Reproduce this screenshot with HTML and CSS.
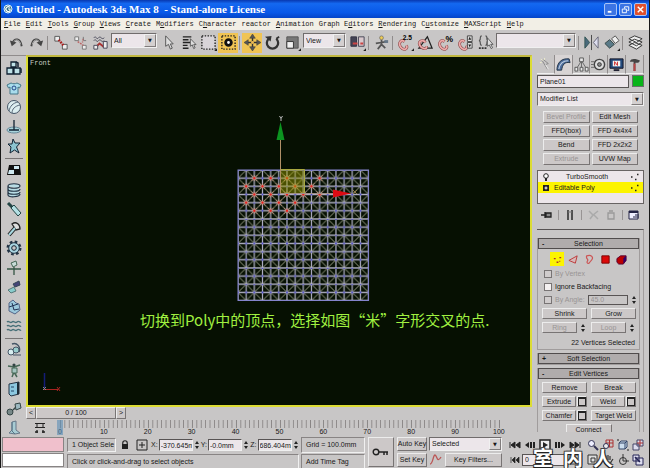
FILE: index.html
```html
<!DOCTYPE html>
<html lang="en">
<head>
<meta charset="UTF-8">
<meta name="viewport" content="width=device-width, initial-scale=1.0">
<title>Untitled - Autodesk 3ds Max 8</title>
<link rel="stylesheet" href="styles.css">
</head>
<body>

<!-- title bar -->
<header class="titlebar">
    <svg class="app-icon" viewBox="0 0 10 10"><circle cx="5" cy="5" r="4" fill="#2a6a80" stroke="#dff4ff"/><path d="M7 3.4A2.4 2.4 0 1 0 7 6.8V5H5" fill="none" stroke="#fff" stroke-width="1.2"/></svg>
    <h1>Untitled - Autodesk 3ds Max 8 &nbsp;- Stand-alone License</h1>
    <div class="win-btns">
        <button aria-label="Minimize"><svg viewBox="0 0 12 12"><path d="M3 8.5h4" stroke="#fff" stroke-width="2"/></svg></button>
        <button aria-label="Restore"><svg viewBox="0 0 12 12"><path d="M5 5V3h4.500v4H8M2.500 5.500h4.500v4H2.500z" fill="none" stroke="#fff"/></svg></button>
        <button class="close" aria-label="Close"><svg viewBox="0 0 12 12"><path d="M3 3l6 6M9 3l-6 6" stroke="#fff" stroke-width="1.600"/></svg></button>
    </div>
</header>

<!-- menu -->
<nav class="menubar">
    <a href="#"><u>F</u>ile</a>
    <a href="#"><u>E</u>dit</a>
    <a href="#"><u>T</u>ools</a>
    <a href="#"><u>G</u>roup</a>
    <a href="#"><u>V</u>iews</a>
    <a href="#"><u>C</u>reate</a>
    <a href="#">M<u>o</u>difiers</a>
    <a href="#">C<u>h</u>aracter</a>
    <a href="#">reactor</a>
    <a href="#"><u>A</u>nimation</a>
    <a href="#">Graph E<u>d</u>itors</a>
    <a href="#"><u>R</u>endering</a>
    <a href="#">C<u>u</u>stomize</a>
    <a href="#"><u>M</u>AXScript</a>
    <a href="#"><u>H</u>elp</a>
</nav>

<!-- main toolbar -->
<div class="toolbar">
    <button class="tool" aria-label="Undo"><svg viewBox="0 0 18 18"><path d="M5 9.500C7 4 13 4 14.500 13" fill="none" stroke="#444" stroke-width="2"/><path d="M2 7l2 6 5-4z" fill="#444"/><path d="M6 8C8 5.500 12 5 13.500 11" fill="none" stroke="#eee" stroke-width=".6"/></svg></button>
    <button class="tool" aria-label="Redo"><svg viewBox="0 0 18 18"><path d="M13 9.500C11 4 5 4 3.500 13" fill="none" stroke="#444" stroke-width="2"/><path d="M16 7l-2 6-5-4z" fill="#444"/><path d="M12 8C10 5.500 6 5 4.500 11" fill="none" stroke="#eee" stroke-width=".6"/></svg></button>
    <i class="sep"></i>
    <button class="tool" aria-label="Link"><svg viewBox="0 0 18 18"><path d="M3 2.500h5v5H3zM11 11h5v5h-5z" fill="#eee" stroke="#555"/><path d="M7 6l5 6" stroke="#a22" stroke-width="2.500" stroke-dasharray="2 1"/></svg></button>
    <button class="tool" aria-label="Unlink"><svg viewBox="0 0 18 18"><path d="M3 3h4v4H3zM11 12h4v4h-4z" fill="#eee" stroke="#777"/><path d="M6 8l6 4M12 5l-1 4" stroke="#b66" stroke-width="1.500" stroke-dasharray="2 1"/><path d="M12 3v3M15 7h-3" stroke="#777"/></svg></button>
    <button class="tool" aria-label="Bind to Space Warp"><svg viewBox="0 0 18 18"><path d="M2 4c2-3 3 3 5 0s3 3 6 0M2 7c2-3 3 3 5 0s3 3 6 0" fill="none" stroke="#445"/><path d="M4 14l4-4 5 4" fill="none" stroke="#a33" stroke-width="2"/><path d="M2 12h4v4H2zM12 8h4v7h-4z" fill="#eee" stroke="#445"/></svg></button>
    <span class="combo combo-filter"><select aria-label="Selection filter"><option>All</option></select></span>
    <button class="tool" aria-label="Select"><svg viewBox="0 0 18 18"><path d="M6 2v11l3-2 2 5 2-1-2-4.500h3z" fill="#ddd" stroke="#555"/></svg></button>
    <button class="tool" aria-label="Select by Name"><svg viewBox="0 0 18 18"><path d="M3 3h9M3 6h6M3 9h8M3 12h5M3 15h6" stroke="#222" stroke-width="1.500"/><path d="M11 5v8l2-1.500 1.500 4 1.500-.8-1.500-3.500H17z" fill="#ddd" stroke="#444" stroke-width=".8"/></svg></button>
    <button class="tool" aria-label="Rectangular Region"><svg viewBox="0 0 18 18"><path d="M2 2h14v14H2z" fill="#d8d4d8" stroke="#222" stroke-width="1.500" stroke-dasharray="1.500 1.500"/><path d="M15 18h3v-3z" fill="#222"/></svg></button>
    <button class="tool on" aria-label="Crossing"><svg viewBox="0 0 18 18"><path d="M2 2h14v14H2z" fill="none" stroke="#222" stroke-width="1.500" stroke-dasharray="1.500 1.500"/><circle cx="9" cy="9" r="3" fill="#fff" stroke="#111" stroke-width="3"/></svg></button>
    <i class="sep"></i>
    <button class="tool on" aria-label="Move"><svg viewBox="0 0 18 18"><path d="M9 3v12M3 9h12" stroke="#333" stroke-width="1.500"/><path d="M9 0l3 4.500H6zM9 18l3-4.500H6zM0 9l4.500-3v6zM18 9l-4.500-3v6z" fill="#555" stroke="#333" stroke-width=".5"/><circle cx="9" cy="9" r="1.500" fill="#eb5"/></svg></button>
    <button class="tool" aria-label="Rotate"><svg viewBox="0 0 18 18"><path d="M5 5a6 6 0 1 0 8 0" fill="none" stroke="#333" stroke-width="2.400"/><path d="M1 3l7-1-1 6z" fill="#333"/><path d="M13 5l3-2" stroke="#333" stroke-width="2"/></svg></button>
    <button class="tool" aria-label="Scale"><svg viewBox="0 0 18 18"><path d="M3 3h12v12H3z" fill="#777" stroke="#555"/><path d="M3 8h7v7H3z" fill="#f0f0f0" stroke="#333"/><path d="M15 18h3v-3z" fill="#222"/></svg></button>
    <span class="combo combo-view"><select aria-label="Reference coordinate system"><option>View</option></select></span>
    <button class="tool" aria-label="Pivot Center"><svg viewBox="0 0 18 18"><path d="M2 3h6v10H2z" fill="#445" stroke="#334"/><path d="M10 3h6v10h-6z" fill="#d8c8cc" stroke="#445"/><path d="M4 10h5M12 10h3" stroke="#c44" stroke-width="2"/><path d="M15 18h3v-3z" fill="#222"/></svg></button>
    <i class="sep"></i>
    <button class="tool" aria-label="Manipulate"><svg viewBox="0 0 18 18"><path d="M9 6v5M3 10l6-1 5-1M9 11l-4 5M9 11l4 4" fill="none" stroke="#555" stroke-width="1.800"/><circle cx="9" cy="4" r="2" fill="#ec5" stroke="#555" stroke-width=".6"/><path d="M12 8h4" stroke="#678" stroke-width="3"/></svg></button>
    <i class="sep"></i>
    <button class="tool" aria-label="Snap 2.5"><svg viewBox="0 0 18 18"><path d="M8 8C4 5 1 10 4 14s8 2 6-2" fill="none" stroke="#844" stroke-width="3"/><path d="M8 8C4 5 1 10 4 14s8 2 6-2" fill="none" stroke="#eaa" stroke-width="1.800"/><text x="6" y="6" class="glyph">2.5</text><path d="M15 18h3v-3z" fill="#222"/></svg></button>
    <button class="tool" aria-label="Angle Snap"><svg viewBox="0 0 18 18"><path d="M2 15h14L11 3z" fill="none" stroke="#222" stroke-width="1.300"/><path d="M9 9C6 5 1 8 3 12s8 5 7 1" fill="none" stroke="#844" stroke-width="3"/><path d="M9 9C6 5 1 8 3 12s8 5 7 1" fill="none" stroke="#eaa" stroke-width="1.800"/></svg></button>
    <button class="tool" aria-label="Percent Snap"><svg viewBox="0 0 18 18"><path d="M8 8C4 5 1 10 4 14s8 2 6-2" fill="none" stroke="#844" stroke-width="3"/><path d="M8 8C4 5 1 10 4 14s8 2 6-2" fill="none" stroke="#eaa" stroke-width="1.800"/><text x="9" y="8" class="glyph big">%</text></svg></button>
    <button class="tool" aria-label="Spinner Snap"><svg viewBox="0 0 18 18"><path d="M8 8C4 5 1 10 4 14s8 2 6-2" fill="none" stroke="#844" stroke-width="3"/><path d="M8 8C4 5 1 10 4 14s8 2 6-2" fill="none" stroke="#eaa" stroke-width="1.800"/><path d="M11 2h5v6h-5zM11 9h5v6h-5z" fill="#ddd" stroke="#444"/><path d="M12 6l1.500-3L15 6zM12 11l1.500 3 1.500-3z" fill="#222"/></svg></button>
    <button class="tool" aria-label="Named Selection Sets"><svg viewBox="0 0 18 18"><path d="M5 2C2 2 5 7 2 7c3 0 0 5 3 5M9 2c3 0 0 5 3 5-3 0 0 5-3 5" fill="none" stroke="#555" stroke-width="1.200"/><path d="M11 4v9l2-1.500 2 4 1.500-1-2-3.500H17z" fill="#ddd" stroke="#444" stroke-width=".8"/><path d="M2 15h8" stroke="#333" stroke-width="2" stroke-dasharray="2 1"/></svg></button>
    <span class="combo combo-sets"><select aria-label="Named selection set"><option></option></select></span>
    <i class="sep"></i>
    <button class="tool" aria-label="Mirror"><svg viewBox="0 0 18 18"><path d="M2 3v12l5-6z" fill="#4a6a7c" stroke="#355"/><path d="M9 1v16" stroke="#444"/><path d="M16 3v12l-5-6z" fill="#dde" stroke="#667"/></svg></button>
    <button class="tool" aria-label="Align"><svg viewBox="0 0 18 18"><path d="M2 10l5-4 5 5-5 4z" fill="#5a7a88" stroke="#344"/><path d="M9 5l4-3 4 5-4 3z" fill="#eee" stroke="#555"/><path d="M15 18h3v-3z" fill="#222"/></svg></button>
    <i class="sep"></i>
    <button class="tool" aria-label="Layers"><svg viewBox="0 0 18 18"><path d="M2 12l6-3 8 3-6 4zM2 8.500l6-3 8 3-6 4zM2 5l6-3 8 3-6 4z" fill="#eee" stroke="#333"/></svg></button>
</div>

<main class="workspace">

    <!-- reactor toolbar -->
    <aside class="reactor">
        <button aria-label="Rigid Body"><svg viewBox="0 0 16 16"><path d="M5 2h5v5H5zM1 8h6v6H1zM8 8h6v6H8z" fill="#bfe2e8" stroke="#123" stroke-width="1.300"/><path d="M10 2l2 1v4M14 8l1 1v4" fill="none" stroke="#123" stroke-width="1.500"/></svg></button>
        <button aria-label="Cloth"><svg viewBox="0 0 16 16"><path d="M1 5l4-2c2 1 4 1 6 0l4 2-1.500 3L12 7v7H4V7l-1.500 1z" fill="#a8dcec" stroke="#478"/><circle cx="8" cy="8" r="2" fill="none" stroke="#248"/></svg></button>
        <button aria-label="Soft Body"><svg viewBox="0 0 16 16"><circle cx="8" cy="8" r="6.500" fill="#dceef0" stroke="#456"/><path d="M3 12C4 7 7 4 12 3M6 14c0-4 3-7 8-8" fill="none" stroke="#567"/></svg></button>
        <button aria-label="Rope"><svg viewBox="0 0 16 16"><ellipse cx="8" cy="11" rx="7" ry="3" fill="#a8d4dc" stroke="#689"/><path d="M8 1v10M3 11h10" stroke="#123" stroke-width="1.300"/></svg></button>
        <button aria-label="Deforming Mesh"><svg viewBox="0 0 16 16"><path d="M7 1l2 4 5 0-3.500 4L13 15l-4.500-3L4 15l1-6-3-3h4z" fill="#8cc4d0" stroke="#123"/></svg></button>
        <hr>
        <button aria-label="Plane"><svg viewBox="0 0 16 16"><path d="M3 3h11l1 10H1z" fill="#111"/><path d="M8 4h5v3H8zM3 8h5v4H2z" fill="#cfe8f0"/></svg></button>
        <button aria-label="Spring"><svg viewBox="0 0 16 16"><path d="M2 4c0-3 12-3 12 0s-12 3-12 0v3c0 3 12 3 12 0M2 7v3c0 3 12 3 12 0M2 10v3c0 3 12 2 12-1" fill="#b8dce4" stroke="#234" stroke-width="1.200"/></svg></button>
        <button aria-label="Dashpot"><svg viewBox="0 0 16 16"><path d="M2 2l5 5" stroke="#244" stroke-width="3"/><path d="M5 7l3-3 7 8-3 3z" fill="#b4e0e4" stroke="#244"/></svg></button>
        <button aria-label="Motor"><svg viewBox="0 0 16 16"><path d="M6 3c4-3 8 0 8 5l-4 1z" fill="#ddd" stroke="#222" stroke-width="1.300"/><path d="M9 7l-6 7" stroke="#222" stroke-width="4"/><path d="M9 7l-6 7" stroke="#a8d8e0" stroke-width="2"/></svg></button>
        <button aria-label="Wheel"><svg viewBox="0 0 16 16"><circle cx="8" cy="8" r="6" fill="none" stroke="#234" stroke-width="3" stroke-dasharray="2.500 2.200"/><circle cx="8" cy="8" r="5.300" fill="#a8d4e0" stroke="#234"/><circle cx="8" cy="8" r="2.300" fill="#c8c6c6" stroke="#123"/></svg></button>
        <button aria-label="Hinge"><svg viewBox="0 0 16 16"><path d="M1 9h14M8 7v8" stroke="#354" stroke-width="1.300"/><path d="M5 3l5-2 1 4-4 2z" fill="#c8dcd8" stroke="#465"/></svg></button>
        <button aria-label="Point to Point"><svg viewBox="0 0 16 16"><path d="M2 11l6-3 2 4-5 2z" fill="#8cc" stroke="#577"/><path d="M7 5l6-3 1 4-5 2z" fill="#447" stroke="#345"/></svg></button>
        <button aria-label="Fracture"><svg viewBox="0 0 16 16"><path d="M3 4l4-3 3 3 3 1 1 6-5 4-6-3z" fill="#9cc8dc" stroke="#568"/><path d="M6 4l2 7 5-1M3 8l9-3" stroke="#235" fill="none"/></svg></button>
        <button aria-label="Water"><svg viewBox="0 0 16 16"><path d="M1 4c2-2 3 2 5 0s3 2 5 0 3 1 4 0M1 8c2-2 3 2 5 0s3 2 5 0 3 1 4 0M1 12c2-2 3 2 5 0s3 2 5 0 3 1 4 0" fill="none" stroke="#487078" stroke-width="1.400"/></svg></button>
        <hr>
        <button aria-label="Wind"><svg viewBox="0 0 16 16"><path d="M6 2c5-2 9 3 7 8" fill="none" stroke="#456" stroke-width="1.500"/><circle cx="5" cy="10" r="3" fill="#d8eef0" stroke="#456"/><circle cx="10" cy="8" r="3" fill="#9cc" stroke="#456"/><path d="M7 13h8" stroke="#456"/></svg></button>
        <button aria-label="Ragdoll"><svg viewBox="0 0 16 16"><path d="M2 4l6 1 6-2M8 4v6M8 10l-2 5M8 10l3 5" stroke="#465" stroke-width="1.500" fill="none"/><circle cx="8" cy="3" r="1.600" fill="#344"/><path d="M6 6h5v5H6z" fill="#a4c4c0" stroke="#465"/></svg></button>
        <button aria-label="Preview"><svg viewBox="0 0 16 16"><path d="M3 3l10-2v12l-8 2-2-2z" fill="#8cc8e0" stroke="#234"/><path d="M11 1.500l2-.5v12l-2 .5z" fill="#1c2c38"/><path d="M5 6h3M5 10h3" stroke="#246"/></svg></button>
        <button aria-label="Properties"><svg viewBox="0 0 16 16"><circle cx="4" cy="11" r="3" fill="#788" stroke="#344"/><path d="M7 9l3-3" stroke="#344" stroke-width="1.500"/><path d="M9 3l5-1 1 5-5 2z" fill="#9cb8c0" stroke="#344"/></svg></button>
        <button aria-label="Analyze"><svg viewBox="0 0 16 16"><path d="M6 2l4-1v9l4 3-5 1-6-1 3-3z" fill="#a8ccd4" stroke="#678"/><path d="M6 2v9l3 3" fill="none" stroke="#578"/></svg></button>
    </aside>

    <section class="center">
        <div class="viewport">
            <span class="view-label">Front</span>
            <svg class="scene" viewBox="0 0 160 204">
                <defs>
                    <pattern id="mesh" width="16" height="16" patternUnits="userSpaceOnUse">
                        <path d="M0 8L8 0L16 8L8 16z" fill="none" stroke="#a4a890" stroke-width=".9"/>
                        <path d="M0 0h16M0 8h16M0 0v16M8 0v16M0 16h16M16 0v16" stroke="#b0b0c4" stroke-width="1.200"/>
                        <path d="M-.8 0h1.600M7.200 0h1.600M-.8 8h1.600M7.200 8h1.600M15.200 0h.8M15.200 8h.8" stroke="#4848c8" stroke-width="2"/>
                    </pattern>
                    <!-- selected vertex with its fading edges -->
                    <g id="star"><path d="M-3 0h6M0-3v6M-3-3l6 6M3-3l-6 6" stroke="#c4907c" stroke-width=".9"/><path d="M-1 0h2" stroke="#e8201c" stroke-width="2"/></g>
                </defs>
                <g transform="translate(13 65) scale(1.020)">
                    <rect width="128" height="128" fill="url(#mesh)"/>
                    <path d="M0 0h128v128H0z" fill="none" stroke="#8484cc"/>
                    <use href="#star" x="16" y="8"/><use href="#star" x="32" y="8"/><use href="#star" x="48" y="8"/><use href="#star" x="80" y="8"/>
                    <use href="#star" x="8" y="16"/><use href="#star" x="24" y="16"/><use href="#star" x="40" y="16"/><use href="#star" x="56" y="16"/><use href="#star" x="72" y="16"/>
                    <use href="#star" x="16" y="24"/><use href="#star" x="32" y="24"/><use href="#star" x="48" y="24"/><use href="#star" x="64" y="24"/><use href="#star" x="80" y="24"/>
                    <use href="#star" x="8" y="32"/><use href="#star" x="24" y="32"/><use href="#star" x="40" y="32"/><use href="#star" x="56" y="32"/>
                    <use href="#star" x="16" y="40"/><use href="#star" x="32" y="40"/><use href="#star" x="48" y="40"/>
                </g>
                <!-- move gizmo -->
                <path d="M55.500 64.500h24v24h-24z" fill="#a0a000" fill-opacity=".45" stroke="#a8a840"/>
                <path d="M55.500 88V34" stroke="#b09068"/>
                <path d="M55 88.500h53" stroke="#a09088"/>
                <path d="M55.500 17l-4 18h8z" fill="#0c9420"/>
                <path d="M126 88.500l-18-4v8z" fill="#dc0c14"/>
                <path d="M54.500 11l1.500 2.500 1.500-2.500M56 13.500V16" fill="none" stroke="#b8b8b8"/>
                <path d="M128 85l4 4M132 85l-4 4" stroke="#8c7848"/>
            </svg>
            <p class="caption" lang="zh">切换到Poly中的顶点，选择如图“米”字形交叉的点.</p>
            <svg class="tripod" viewBox="0 0 22 22"><path d="M4.500 2v16" stroke="#141c78" stroke-width="1.500"/><path d="M4 18.500h14" stroke="#a82420"/><path d="M3 16l3 3M6 16l-3 3" stroke="#888"/><path d="M17 16l3 4M20 16l-3 4" stroke="#a82420"/></svg>
        </div>

        <div class="time-slider">
            <button class="step">&lt;</button>
            <button class="thumb">0 / 100</button>
            <button class="step">&gt;</button>
        </div>

        <div class="trackbar">
            <svg class="curve-icon" viewBox="0 0 12 12"><path d="M1 1.500h10M1 5.500h10M3 1v4M9 1v4" stroke="#222" fill="none"/><path d="M1 10h3M8 10h3M3 8v3M9 8v3" stroke="#222" stroke-width="1.300"/></svg>
            <div class="ruler">
                <span class="now">0</span><span>10</span><span>20</span><span>30</span><span>40</span><span>50</span><span>60</span><span>70</span><span>80</span><span>90</span><span class="end">100</span>
            </div>
        </div>
    </section>

    <!-- command panel -->
    <aside class="panel">
        <div class="tabs">
            <button aria-label="Create"><svg viewBox="0 0 16 16"><path d="M4 3l6 10M6 3l5 4-3 1" fill="none" stroke="#888"/><path d="M3 2l2 2M2 6h2M7 1v2" stroke="#eec"/><path d="M8 8l3 5" stroke="#eee"/></svg></button>
            <button class="active" aria-label="Modify"><svg viewBox="0 0 16 16"><path d="M1 14C1 6 6 1 14 2l1 4C9 5 7 8 6 14z" fill="#4c6c9c" stroke="#234"/><path d="M3 13C4 7 7 4 13 4" fill="none" stroke="#bcd" stroke-width="1.300"/></svg></button>
            <button aria-label="Hierarchy"><svg viewBox="0 0 16 16"><path d="M8 4L3 12M8 4l5 8M8 4v8" stroke="#666"/><path d="M6 1h4v4H6zM1 11h3v4H1zM6.500 11h3v4h-3zM12 11h3v4h-3z" fill="#e8e8e8" stroke="#555"/></svg></button>
            <button aria-label="Motion"><svg viewBox="0 0 16 16"><circle cx="9" cy="8" r="5.500" fill="#ddd" stroke="#444" stroke-width="1.500"/><circle cx="9" cy="8" r="2" fill="#888" stroke="#333"/><path d="M0 5h4M0 8h3M0 11h4" stroke="#666"/></svg></button>
            <button aria-label="Display"><svg viewBox="0 0 16 16"><path d="M1 2h14v10H1z" fill="#234a7c" stroke="#112"/><path d="M4 4h8v6H4z" fill="#f4f4f4"/><path d="M6 9V5l3 4V5" fill="none" stroke="#c22"/><path d="M5 14h6" stroke="#223" stroke-width="2"/></svg></button>
            <button aria-label="Utilities"><svg viewBox="0 0 16 16"><path d="M3 5c1-4 7-3 11-1l-2 2H9v9H7V5z" fill="#444"/><path d="M8 7v8" stroke="#b44" stroke-width="2"/></svg></button>
        </div>

        <div class="obj-name">
            <input type="text" value="Plane01" aria-label="Object name">
            <button class="swatch" aria-label="Object color"></button>
        </div>
        <span class="combo combo-mod"><select aria-label="Modifier list"><option>Modifier List</option></select></span>

        <div class="mod-btns">
            <button disabled>Bevel Profile</button><button>Edit Mesh</button>
            <button>FFD(box)</button><button>FFD 4x4x4</button>
            <button>Bend</button><button>FFD 2x2x2</button>
            <button disabled>Extrude</button><button>UVW Map</button>
        </div>

        <ul class="stack">
            <li><svg viewBox="0 0 8 8"><circle cx="4" cy="3" r="2.300" fill="#fff" stroke="#222"/><path d="M4 5v3" stroke="#222" stroke-width="2"/></svg><span class="indent">TurboSmooth</span><svg class="dots" viewBox="0 0 8 8"><path d="M0 4h1.500M4 6.500h1.500M6 1.500h1.500" stroke="#222" stroke-width="1.500"/></svg></li>
            <li class="selected"><svg viewBox="0 0 8 8"><path d="M1 1h6v6H1z" fill="#222"/><path d="M2.500 4h3M4 2.500v3" stroke="#fff"/></svg><span>Editable Poly</span><svg class="dots" viewBox="0 0 8 8"><path d="M0 4h1.500M4 6.500h1.500M6 1.500h1.500" stroke="#222" stroke-width="1.500"/></svg></li>
        </ul>

        <div class="stack-tools">
            <button aria-label="Pin Stack"><svg viewBox="0 0 12 12"><path d="M0 6h4M4 3v6M5 4h5v4H5z" fill="#888" stroke="#222" stroke-width="1.300"/></svg></button>
            <i></i>
            <button aria-label="Show End Result"><svg viewBox="0 0 12 12"><path d="M4 1v10M8 1v10" stroke="#333" stroke-width="1.600"/><path d="M4 3h4" stroke="#777"/></svg></button>
            <i></i>
            <button aria-label="Make Unique"><svg viewBox="0 0 12 12"><path d="M1 2l4 4 5-4M5 6L2 10M6 6l4 4" stroke="#aaa" fill="none" stroke-width="1.500"/></svg></button>
            <button aria-label="Remove Modifier"><svg viewBox="0 0 12 12"><path d="M3 4h6v6H3zM4 2h4" stroke="#999" fill="none" stroke-width="1.300"/></svg></button>
            <i></i>
            <button aria-label="Configure"><svg viewBox="0 0 12 12"><path d="M1 2h9v8H1z" fill="#eef" stroke="#224"/><path d="M1 3h9" stroke="#224" stroke-width="2"/><path d="M5 8h6M7 6h4" stroke="#224"/></svg></button>
        </div>

        <div class="rollouts">
            <section class="rollout">
                <h2><b>-</b>Selection</h2>
                <div class="subobj">
                    <button class="on" aria-label="Vertex"><svg viewBox="0 0 12 12"><path d="M2 5h2M5 9h2M8 4h2M8 8h1" stroke="#a33" stroke-width="1.500"/></svg></button>
                    <button aria-label="Edge"><svg viewBox="0 0 12 12"><path d="M1 7l9-5-2 8z" fill="#d8b8b8" stroke="#b33"/></svg></button>
                    <button aria-label="Border"><svg viewBox="0 0 12 12"><path d="M3 2c5-2 8 2 5 5s-2 4-4 3 1-3 0-4-2-2-1-4z" fill="none" stroke="#c55" stroke-width="1.300"/></svg></button>
                    <button aria-label="Polygon"><svg viewBox="0 0 12 12"><path d="M2 2h8v8H2z" fill="#dc0808" stroke="#700"/></svg></button>
                    <button aria-label="Element"><svg viewBox="0 0 12 12"><path d="M1 5l4-3h6v5l-3 4H3L1 9z" fill="#b00" stroke="#503"/><path d="M8 4.500L11 2v5l-3 3.500z" fill="#306"/></svg></button>
                </div>
                <label class="check off"><input type="checkbox" disabled>By Vertex</label>
                <label class="check"><input type="checkbox">Ignore Backfacing</label>
                <div class="angle">
                    <label class="check off"><input type="checkbox" disabled>By Angle:</label>
                    <input class="num off" type="text" value="45.0" aria-label="Angle" disabled><span class="spin"></span>
                </div>
                <div class="pair"><button>Shrink</button><button>Grow</button></div>
                <div class="pair">
                    <div class="with-box"><button disabled>Ring</button><span class="spin"></span></div>
                    <div class="with-box"><button disabled>Loop</button><span class="spin"></span></div>
                </div>
                <p class="count">22 Vertices Selected</p>
            </section>
            <section class="rollout"><h2><b>+</b>Soft Selection</h2></section>
            <section class="rollout">
                <h2><b>-</b>Edit Vertices</h2>
                <div class="pair"><button>Remove</button><button>Break</button></div>
                <div class="pair">
                    <div class="with-box"><button>Extrude</button><button class="settings" aria-label="Extrude settings"></button></div>
                    <div class="with-box"><button>Weld</button><button class="settings" aria-label="Weld settings"></button></div>
                </div>
                <div class="pair">
                    <div class="with-box"><button>Chamfer</button><button class="settings" aria-label="Chamfer settings"></button></div>
                    <button>Target Weld</button>
                </div>
                <button class="connect">Connect</button>
            </section>
        </div>
    </aside>
</main>

<!-- status bar -->
<footer class="status">
    <div class="listener"><div class="macro"></div><div class="script"></div></div>

    <div class="info">
        <div class="coords">
            <span class="objs">1 Object Sele</span>
            <svg viewBox="0 0 12 12"><path d="M3 6V4a3 3 0 0 1 6 0v2" transform="translate(1.500 1) scale(.75)" fill="none" stroke="#222" stroke-width="1.500"/><path d="M3 5h6v5H3z" fill="#222"/></svg>
            <svg viewBox="0 0 12 12"><path d="M1 1h10v10H1z" fill="none" stroke="#222"/><path d="M6 3v6M3 6h6" stroke="#222"/></svg>
            <label>X:<input type="text" value="-370.645mm"></label><span class="spin"></span>
            <label>Y:<input type="text" value="-0.0mm"></label><span class="spin"></span>
            <label>Z:<input type="text" value="686.404mm"></label><span class="spin"></span>
        </div>
        <span class="cell">Grid = 100.0mm</span>
        <span class="prompt">Click or click-and-drag to select objects</span>
        <span class="cell tag">Add Time Tag</span>
    </div>

    <button class="key-btn" aria-label="Set Keys"><svg viewBox="0 0 18 10"><circle cx="4" cy="5" r="2.800" fill="none" stroke="#222" stroke-width="1.400"/><path d="M7 5h9M12 5v3M15 5v3" stroke="#222" stroke-width="1.500"/></svg></button>

    <div class="keys">
        <button>Auto Key</button>
        <span class="combo"><select aria-label="Key set"><option>Selected</option></select></span>
        <button>Set Key</button>
        <div class="filters">
            <svg viewBox="0 0 14 12"><path d="M1 11c3 0 3-9 5-9s2 9 6 2" fill="none" stroke="#b55" stroke-width="1.300"/></svg>
            <button>Key Filters...</button>
        </div>
    </div>

    <div class="play">
        <button aria-label="Go to Start"><svg viewBox="0 0 14 12"><path d="M2 3v6M7 3v6L3 6zM12 3v6L8 6z" fill="#222" stroke="#222"/></svg></button>
        <button aria-label="Previous Frame"><svg viewBox="0 0 14 12"><path d="M6 3v6L2 6z" fill="#222"/><path d="M8 3v6M11 3v6" stroke="#222" stroke-width="2"/></svg></button>
        <button aria-label="Play"><svg viewBox="0 0 14 12"><path d="M2 1h10v10H2z" fill="#eee" stroke="#222" stroke-width="1.500"/><path d="M5 3v6l5-3z" fill="#222"/></svg></button>
        <button aria-label="Next Frame"><svg viewBox="0 0 14 12"><path d="M8 3v6l4-3z" fill="#222"/><path d="M3 3v6M6 3v6" stroke="#222" stroke-width="2"/></svg></button>
        <button aria-label="Go to End"><svg viewBox="0 0 14 12"><path d="M12 3v6M7 3v6l4-3zM2 3v6l4-3z" fill="#222" stroke="#222"/></svg></button>
        <button aria-label="Key Mode"><svg viewBox="0 0 14 12"><path d="M3 3v6M7 3v6L4 6zM11 3v6L8 6z" fill="#222" stroke="#222" stroke-width=".7"/></svg></button>
        <input class="frame" type="text" value="0" aria-label="Current frame">
        <button aria-label="Time Configuration"><svg viewBox="0 0 14 12"><path d="M2 1h9v9H2z" fill="#ddd" stroke="#333"/><path d="M6 3v3h3" fill="none" stroke="#333"/></svg></button>
    </div>

    <div class="nav">
        <button aria-label="Zoom"><svg viewBox="0 0 12 12"><circle cx="4.500" cy="4.500" r="3" fill="#eef" stroke="#335"/><path d="M7 7l4 4" stroke="#335" stroke-width="2"/></svg></button>
        <button aria-label="Zoom All"><svg viewBox="0 0 12 12"><path d="M4 1h7v7H4zM4 4h7M7.500 1v7" fill="none" stroke="#a33"/><circle cx="4" cy="7" r="2.500" fill="#eee" stroke="#335"/></svg></button>
        <button aria-label="Zoom Extents"><svg viewBox="0 0 12 12"><path d="M2 4l2-2h6v6l-2 2H2zM2 4h6v6M8 4l2-2" fill="#cde" stroke="#346"/><path d="M0 1h2M10 11h2" stroke="#222"/></svg></button>
        <button aria-label="Zoom Extents All"><svg viewBox="0 0 12 12"><path d="M5 1h6v6H5zM1 5h6v6H1z" fill="#dde" stroke="#446"/><path d="M5 4h6M8 1v6" stroke="#a33"/></svg></button>
        <button aria-label="Region Zoom"><svg viewBox="0 0 12 12"><path d="M1 1h9v9H1z" fill="#ddd" stroke="#333"/><path d="M4 4h4v4H4z" fill="none" stroke="#333"/></svg></button>
        <button aria-label="Pan"><svg viewBox="0 0 12 12"><path d="M2 6V3M4 6V1.500M6 6V1M8 6V2M2 6c0 6 6 6 7 2l2-3" fill="none" stroke="#333" stroke-width="1.200"/></svg></button>
        <button aria-label="Arc Rotate"><svg viewBox="0 0 12 12"><circle cx="6" cy="7" r="3.500" fill="none" stroke="#333"/><path d="M6 0v7h6" fill="none" stroke="#333"/></svg></button>
        <button aria-label="Maximize Viewport"><svg viewBox="0 0 12 12"><path d="M1 1h6v6H1zM4 4h7v7H4z" fill="#dde" stroke="#225"/><path d="M3 3l5 5" stroke="#225" stroke-width="1.500"/></svg></button>
    </div>
    <div class="watermark" lang="zh"><span>室</span><span>内</span><span>人</span></div>
</footer>

</body>
</html>
```
FILE: styles.css
```css
* {
    box-sizing: border-box;
}
body {
    margin: 0;
    height: 100vh;
    display: flex;
    flex-direction: column;
    overflow: hidden;
    background-color: #c8c6c6;
    border-left: 1px solid #181818;
    border-right: 1px solid #181818;
    font-family: "Liberation Sans", Arial, sans-serif;
    font-size: 7px;
    line-height: 10px;
    color: #181818;
}
h1, h2, p, ul {
    margin: 0;
    padding: 0;
}
button, input, select {
    font: inherit;
    color: inherit;
    margin: 0;
    padding: 0;
    min-width: 0;
    border: none;
    border-radius: 0;
    background: none;
}
button {
    display: flex;
    align-items: center;
    justify-content: center;
    white-space: nowrap;
}
button:disabled {
    color: #989494;
}
svg {
    display: block;
}

/* title bar */
.titlebar {
    display: flex;
    align-items: center;
    height: 18px;
    flex: none;
    padding: 0 2px;
    background: linear-gradient(#0838b0, #1468f0 20%, #0858e8 70%, #0444c8);
}
.app-icon {
    width: 10px;
    height: 10px;
}
.titlebar h1 {
    flex: 1;
    padding-left: 3px;
    font-family: "Liberation Serif", serif;
    font-size: 11px;
    font-weight: bold;
    color: #fff;
}
.win-btns {
    display: flex;
    gap: 2px;
}
.win-btns button {
    width: 13px;
    height: 13px;
    border: 1px solid #a8c4f8;
    border-radius: 2px;
    background-color: #3c74e4;
}
.win-btns .close {
    background-color: #e0502c;
}
.win-btns svg {
    width: 11px;
    height: 11px;
}

/* menu */
.menubar {
    display: flex;
    align-items: center;
    flex: none;
    height: 12px;
    gap: 5px;
    padding-left: 3px;
    background-color: #f2efe6;
    font-family: "Liberation Mono", monospace;
    white-space: nowrap;
}
.menubar a {
    color: #181818;
    text-decoration: none;
}

/* main toolbar */
.toolbar {
    display: flex;
    align-items: center;
    flex: none;
    height: 25px;
    padding-left: 5px;
}
.tool {
    width: 20px;
    height: 20px;
    flex: none;
}
.tool svg {
    width: 17px;
    height: 17px;
}
.tool.on {
    background-color: #f0c454;
}
.glyph {
    font-size: 7px;
    font-weight: bold;
}
.glyph.big {
    font-size: 9px;
}
.sep {
    flex: none;
    width: 1px;
    height: 14px;
    margin: 0 2px 0 1px;
    background-color: #908c8c;
}

/* drop-downs */
.combo {
    display: flex;
    height: 13px;
    border: 1px solid #706c6c;
    border-right-color: #f0f0f0;
    border-bottom-color: #f0f0f0;
    background-color: #ece6ea;
}
.combo select {
    flex: 1;
    appearance: none;
    padding-left: 2px;
}
.combo::after {
    content: "▼";
    width: 10px;
    border: 1px solid #f0f0f0;
    border-right-color: #807c7c;
    border-bottom-color: #807c7c;
    background-color: #d4d0d0;
    font-family: "DejaVu Sans", sans-serif;
    font-size: 5px;
    line-height: 9px;
    text-align: center;
}
.toolbar .combo {
    flex: none;
    height: 15px;
    align-self: flex-start;
    margin: 3px 1px 0;
}
.toolbar .combo::after {
    line-height: 11px;
}
.toolbar .combo-filter {
    width: 46px;
}
.toolbar .combo-view {
    width: 43px;
}
.toolbar .combo-sets {
    width: 80px;
}

.workspace {
    flex: 1;
    display: flex;
    min-height: 0;
}

/* reactor toolbar */
.reactor {
    width: 25px;
    flex: none;
    display: flex;
    flex-direction: column;
    align-items: center;
    justify-content: space-between;
    padding-top: 4px;
    border-top: 1px solid #908c8c;
}
.reactor svg {
    width: 16px;
    height: 16px;
}
.reactor hr {
    width: 18px;
    height: 1px;
    margin: 0;
    border: none;
    background-color: #787474;
}

/* viewport */
.center {
    flex: 1;
    min-width: 0;
    display: flex;
    flex-direction: column;
}
.viewport {
    flex: 1;
    position: relative;
    background-color: #061002;
    border: 2px solid #dcdc34;
    border-top-color: #c0b840;
    overflow: hidden;
}
.view-label {
    position: absolute;
    left: 2px;
    top: 1px;
    font-family: "Liberation Mono", monospace;
    color: #c8ccc4;
}
.scene {
    position: absolute;
    left: 197px;
    top: 48px;
    width: 160px;
    height: 204px;
}
.caption {
    position: absolute;
    left: 112px;
    top: 252px;
    font-family: "Noto Sans CJK SC", sans-serif;
    font-size: 15px;
    line-height: 22px;
    white-space: nowrap;
    color: #a0f040;
}
.tripod {
    position: absolute;
    left: 12px;
    bottom: 12px;
    width: 22px;
    height: 22px;
}

/* time slider */
.time-slider {
    display: flex;
    flex: none;
    height: 12px;
}
.time-slider button,
.mod-btns button,
.pair button,
.connect,
.keys button,
.key-btn {
    border: 1px solid #ececec;
    border-right-color: #787474;
    border-bottom-color: #787474;
    background-color: #ccc8c8;
}
.time-slider .step {
    width: 10px;
}
.time-slider .thumb {
    width: 80px;
}
.trackbar {
    display: flex;
    flex: none;
    height: 17px;
    padding: 1px 32px 0 8px;
}
.curve-icon {
    width: 12px;
    height: 12px;
    margin-top: 2px;
}
.ruler {
    flex: 1;
    display: flex;
    margin-left: 14px;
}
.ruler span {
    flex: 1;
    width: 0;
    display: flex;
    padding-top: 7px;
    background: linear-gradient(90deg, #888484 1px, transparent 1px) 0 0 / 10% 8px repeat-x;
    text-indent: -4px;
}
.ruler .now {
    text-indent: -2px;
    position: relative;
}
.ruler .now::before {
    content: "";
    position: absolute;
    left: -3px;
    top: 0;
    width: 6px;
    height: 15px;
    background-color: #5c90b8;
    opacity: .6;
}
.ruler .end {
    flex: none;
    width: 1px;
    text-indent: -6px;
}

/* command panel */
.panel {
    width: 117px;
    flex: none;
    display: flex;
    flex-direction: column;
    padding: 0 5px 4px;
    min-height: 0;
}
.tabs {
    display: flex;
    height: 19px;
    flex: none;
}
.tabs button {
    flex: 1;
    border-right: 1px solid #908c8c;
    border-bottom: 1px solid #f0f0f0;
}
.tabs .active {
    background-color: #d8d4d4;
    border-bottom-color: #d8d4d4;
}
.tabs svg {
    width: 15px;
    height: 15px;
}
.obj-name {
    display: flex;
    gap: 3px;
    margin-top: 1px;
}
.obj-name input {
    flex: 1;
    height: 13px;
    padding-left: 2px;
    border: 1px solid #585454;
    background-color: #ece6ea;
}
.swatch {
    width: 12px;
    height: 12px;
    border: 1px solid #687068;
    background-color: #08b418;
}
.combo-mod {
    height: 14px;
    flex: none;
    margin-top: 4px;
}
.combo-mod::after {
    line-height: 10px;
}
.mod-btns {
    display: grid;
    grid-template-columns: 1fr 1fr;
    gap: 2px;
    margin: 5px 6px;
}
.mod-btns button {
    height: 12px;
}
.stack {
    flex: none;
    height: 34px;
    border: 1px solid #686464;
    background-color: #ece6ea;
    list-style: none;
}
.stack li {
    display: flex;
    align-items: center;
    height: 11px;
    padding: 0 4px;
    gap: 4px;
}
.stack svg {
    width: 8px;
    height: 8px;
}
.stack .indent {
    padding-left: 12px;
}
.stack .dots {
    margin-left: auto;
}
.stack .selected {
    background-color: #fcf400;
}
.stack-tools {
    display: flex;
    align-items: center;
    justify-content: space-between;
    flex: none;
    height: 21px;
    padding: 0 4px;
}
.stack-tools svg {
    width: 12px;
    height: 12px;
}
.stack-tools i {
    width: 1px;
    height: 10px;
    background-color: #989494;
}
.rollouts {
    flex: 1;
    display: flex;
    flex-direction: column;
    gap: 3px;
    min-height: 0;
    overflow: hidden;
    margin-top: 4px;
    padding: 8px 3px 0 0;
    border-top: 1px solid #585454;
    border-right: 1px solid #a09c9c;
}
.rollout {
    flex: none;
    display: flex;
    flex-direction: column;
    gap: 3px;
    border: 1px solid #a09c9c;
    border-top: none;
}
.rollout h2 {
    position: relative;
    height: 11px;
    border: 1px solid #504c4c;
    background-color: #b0acac;
    font-size: 7px;
    font-weight: normal;
    line-height: 9px;
    text-align: center;
}
.rollout h2 b {
    position: absolute;
    left: 3px;
}
.subobj {
    display: flex;
    gap: 2px;
    padding-left: 12px;
}
.subobj button {
    width: 14px;
    height: 14px;
}
.subobj .on {
    background-color: #fcf400;
}
.subobj svg {
    width: 11px;
    height: 11px;
}
.check {
    display: flex;
    align-items: center;
    gap: 3px;
    padding-left: 6px;
}
.check input {
    appearance: none;
    width: 8px;
    height: 8px;
    border: 1px solid #787474;
    background-color: #f4f0f0;
}
.off {
    color: #989494;
}
.check.off input {
    background-color: #d0cccc;
}
.angle {
    display: flex;
    align-items: center;
    gap: 3px;
}
.num {
    width: 40px;
    height: 10px;
    padding-left: 2px;
    border: 1px solid #585454;
}
/* tiny up and down arrows */
.spin {
    width: 6px;
    flex: none;
    display: flex;
    flex-direction: column;
    align-items: center;
    justify-content: center;
    gap: 2px;
}
.spin::before,
.spin::after {
    content: "";
    border: 2px solid transparent;
}
.spin::before {
    border-top: none;
    border-bottom: 3px solid #222;
}
.spin::after {
    border-bottom: none;
    border-top: 3px solid #222;
}
.pair {
    display: grid;
    grid-template-columns: 1fr 1fr;
    gap: 4px;
    padding: 0 3px 0 4px;
}
.pair button {
    height: 11px;
}
.with-box {
    display: flex;
    gap: 1px;
}
.with-box button {
    flex: 1;
}
.with-box .spin {
    width: 9px;
}
.with-box .settings {
    flex: none;
    width: 10px;
}
.settings::before {
    content: "";
    width: 6px;
    height: 6px;
    border: 1px solid #222;
    border-top-width: 2px;
}
.count {
    padding: 2px 4px 1px 0;
    text-align: right;
}
.connect {
    width: 46px;
    height: 11px;
    align-self: center;
}

/* status bar */
.status {
    position: relative;
    flex: none;
    display: flex;
    gap: 3px;
    height: 32px;
    padding: 1px 4px 1px 1px;
}
.listener {
    width: 62px;
    display: grid;
    gap: 1px;
}
.macro,
.script {
    border: 1px solid #888484;
    background-color: #f0c0cc;
}
.script {
    background-color: #fff;
}
.info {
    flex: 1;
    display: grid;
    grid-template-columns: 1fr 64px;
    gap: 1px 2px;
    white-space: nowrap;
}
.coords {
    display: flex;
    align-items: center;
    gap: 1px;
    min-width: 0;
}
.coords svg {
    width: 12px;
    height: 12px;
    margin: 0 2px;
}
.coords label {
    display: flex;
    flex: 1;
    align-items: center;
    gap: 1px;
}
.coords input {
    width: 0;
    flex: 1;
    height: 12px;
    padding-left: 1px;
    border: 1px solid #585454;
    border-right-color: #f0f0f0;
    border-bottom-color: #f0f0f0;
    background-color: #ece6ea;
}
.objs,
.prompt,
.cell {
    padding: 2px 4px;
    border: 1px solid #888484;
    border-right-color: #f0f0f0;
    border-bottom-color: #f0f0f0;
}
.objs {
    padding: 1px 1px 1px 4px;
}
.key-btn {
    width: 26px;
}
.key-btn svg {
    width: 18px;
    height: 10px;
}
.keys {
    display: grid;
    grid-template-columns: 30px 73px;
    grid-template-rows: 1fr 1fr;
    gap: 2px;
}
.keys .combo {
    height: 14px;
}
.keys .combo::after {
    line-height: 10px;
}
.filters {
    display: flex;
    gap: 2px;
}
.filters svg {
    width: 14px;
    height: 12px;
}
.filters button {
    flex: 1;
}
.play {
    display: grid;
    grid-template-columns: repeat(5, 15px);
    justify-items: center;
    margin-left: 2px;
}
.play svg {
    width: 14px;
    height: 12px;
}
.frame {
    grid-column: span 3;
    width: 100%;
    height: 12px;
    align-self: center;
    padding-left: 2px;
    border: 1px solid #585454;
    background-color: #ece6ea;
}
.nav {
    display: grid;
    grid-template-columns: repeat(4, 15px);
    justify-items: center;
}
.nav svg {
    width: 12px;
    height: 12px;
}
.watermark {
    position: absolute;
    right: 36px;
    bottom: 0;
    display: flex;
    gap: 10px;
    font-family: "Noto Sans CJK SC", sans-serif;
    font-size: 20px;
    font-weight: bold;
    line-height: 20px;
    color: #fff;
    text-shadow: 1px 1px 0 #222, -1px -1px 0 #444, 1px -1px 0 #444, -1px 1px 0 #222;
}
```
